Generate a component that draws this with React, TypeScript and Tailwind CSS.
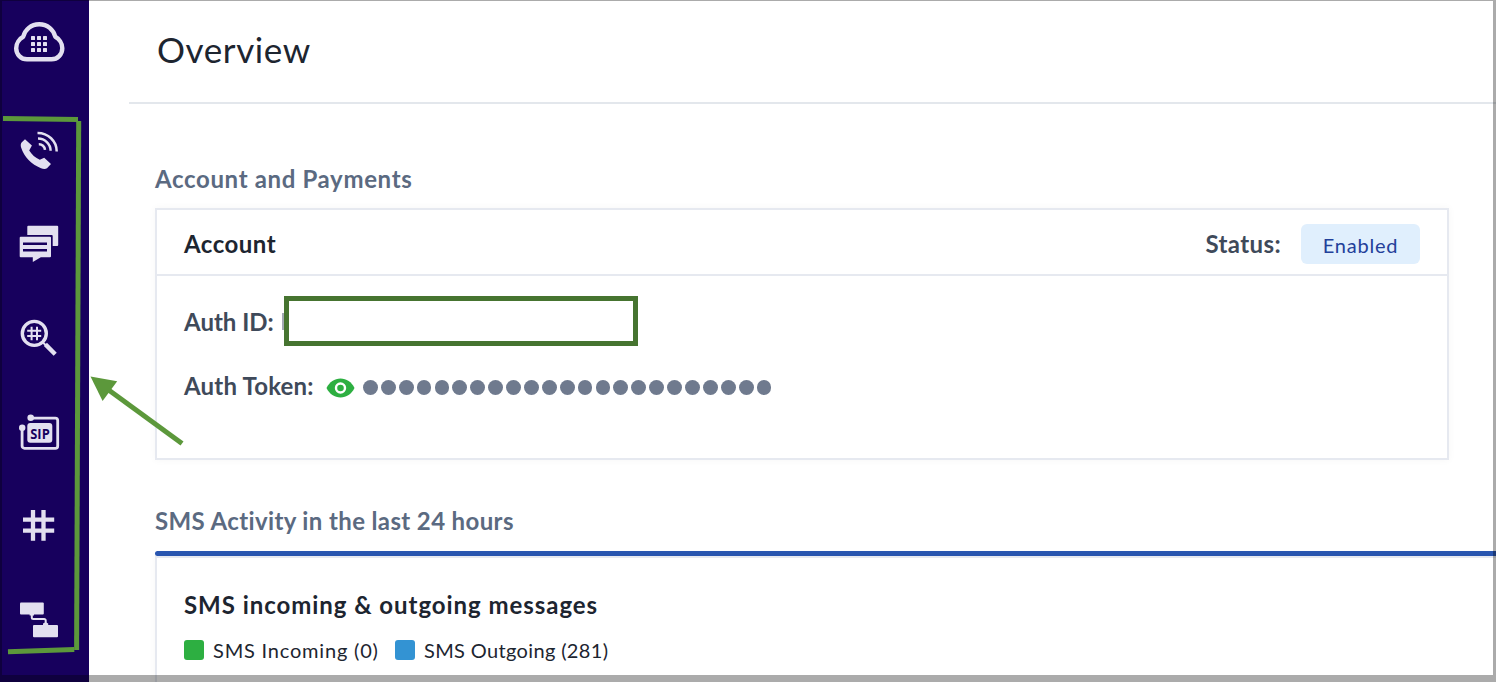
import type { ReactNode } from "react";

function NavIcon({ children }: { children: ReactNode }) {
  return (
    <a className="block h-[50px] w-[51px] shrink-0 text-[#e3e0f0]">
      <svg viewBox="0 0 51 50" className="h-[50px] w-[51px] overflow-visible" fill="none">
        {children}
      </svg>
    </a>
  );
}

function Sidebar() {
  return (
    <aside className="flex h-full w-[89px] shrink-0 flex-col bg-[#17005d] pl-3.5 pt-[17px]">
      <NavIcon>
        <path
          d="M13 42.3H37.5C43.5 42.3 48.3 37.5 48.3 31.2C48.3 26.3 45 21.8 41.3 19.8C39.5 12.6 33.5 7.3 25.2 7.3C17 7.3 11 12.6 9.2 19.8C5.5 21.8 2.2 26.3 2.2 31.2C2.2 37.5 7 42.3 13 42.3Z"
          stroke="currentColor"
          strokeWidth="4.4"
          strokeLinejoin="round"
        />
        {[19, 25, 31].map((y) =>
          [17, 23, 29].map((x) => (
            <rect key={`${x}-${y}`} x={x} y={y} width="4" height="4" rx="0.6" fill="currentColor" />
          ))
        )}
      </NavIcon>

      <nav className="mt-[59px] flex flex-col gap-11">
        {/* Voice */}
        <NavIcon>
          <path
            d="M11 13.3L17.9 19.6L15.2 24.6C17.6 28.6 21.4 32 25.8 33.7L30.2 31.8L37 38L33 42.3C31.6 43.4 29 43.2 27 42.3C17.4 38.4 10.2 31 7.1 21.6C6.5 19.4 6.7 17.2 7.8 16.2Z"
            fill="currentColor"
          />
          <g stroke="currentColor" strokeWidth="2.5">
            <path d="M23.5 6.9A19 18.5 0 0 1 42.7 25.4" />
            <path d="M24 12.6A12.5 12.2 0 0 1 36.6 24.7" />
            <path d="M24.8 18.3A6 6 0 0 1 31 23.8" />
          </g>
        </NavIcon>
        {/* Messaging */}
        <NavIcon>
          <path
            d="M14.3 5.7H43.2a1 1 0 0 1 1 1V25a1 1 0 0 1-1 1H38.7V16a1 1 0 0 0-1-1H13.3V6.7a1 1 0 0 1 1-1Z"
            fill="currentColor"
          />
          <path
            d="M6.7 16.8H36a1 1 0 0 1 1 1V36.2a1 1 0 0 1-1 1H26.8L18.8 42V37.2H6.7a1 1 0 0 1-1-1V17.8a1 1 0 0 1 1-1Z"
            fill="currentColor"
          />
          <path d="M9 23.8H33M9 30.2H33" stroke="#17005d" strokeWidth="2.6" />
        </NavIcon>
        {/* Lookup */}
        <NavIcon>
          <circle cx="20.3" cy="19.4" r="12" stroke="currentColor" strokeWidth="3.4" />
          <path
            d="M17.6 12.8V26.2M23 12.8V26.2M13.2 16.8H27.2M13.2 22.1H27.2"
            stroke="currentColor"
            strokeWidth="2"
          />
          <path d="M28 27.5L32 31.5" stroke="currentColor" strokeWidth="2" />
          <path d="M31.4 30.4L41.2 40.2" stroke="currentColor" strokeWidth="4.4" />
        </NavIcon>
        {/* SIP */}
        <NavIcon>
          <path
            d="M16.7 10.1H41.3a2.4 2.4 0 0 1 2.4 2.4V37.9a2.4 2.4 0 0 1-2.4 2.4H10.5a2.4 2.4 0 0 1-2.4-2.4V19.7"
            stroke="currentColor"
            strokeWidth="2.8"
          />
          <circle cx="16.7" cy="9.7" r="3.3" fill="currentColor" />
          <circle cx="8.2" cy="19.7" r="3.2" fill="currentColor" />
          <rect x="13.3" y="15" width="25" height="19.8" rx="3" fill="currentColor" />
          <text
            x="16.3"
            y="30.6"
            textLength="19.4"
            lengthAdjust="spacingAndGlyphs"
            className="fill-[#17005d] font-['Open_Sans',sans-serif] text-[14px] font-bold"
          >
            SIP
          </text>
        </NavIcon>
        {/* Phone numbers */}
        <NavIcon>
          <path
            d="M19 8V38.8M29.5 8V38.8M9 17.7H40.2M9 28.7H40.2"
            stroke="currentColor"
            strokeWidth="4.3"
          />
        </NavIcon>
        {/* Flows */}
        <NavIcon>
          <rect x="6" y="6.4" width="23.8" height="12" rx="1" fill="currentColor" />
          <rect x="19" y="28.9" width="25" height="12.4" rx="1" fill="currentColor" />
          <path
            d="M17.8 19V21.4a1.5 1.5 0 0 0 1.5 1.5H30.2a1.5 1.5 0 0 1 1.5 1.5V28"
            stroke="currentColor"
            strokeWidth="2"
          />
          <path d="M15.6 18H20V19.6H15.6ZM29 29V27.4L31 26.4H32.4L34.2 27.4V29Z" fill="currentColor" />
        </NavIcon>
      </nav>
    </aside>
  );
}

function AccountCard() {
  return (
    <div className="h-[252px] w-[1294px] border-2 border-[#e6e9f0] shadow-[0_0_8px_rgba(0,0,0,0.04)]">
      <div className="flex h-[66px] items-center border-b-2 border-[#e6e9f0] px-[27px] pt-1">
        <h3 className="text-2xl/8 font-bold tracking-[0.5px] text-[#1d2530]">Account</h3>
        <span className="ml-auto text-2xl/8 font-bold tracking-[0.4px] text-[#3f4a5a]">
          Status:
        </span>
        <span className="ml-5 flex h-10 w-[119px] items-center justify-center rounded-md bg-[#e0effd] pt-0.5 text-xl tracking-[0.8px] text-[#23409a]">
          Enabled
        </span>
      </div>
      <div className="px-[27px] pt-5 text-2xl/8 font-bold text-[#3f4a5a]">
        <div className="flex h-[50px] items-center">
          <span className="w-[98px] whitespace-nowrap pt-0.5">Auth ID:</span>
          <span className="h-[17px] w-0.5 bg-[#a3a9b3]" />
          <div className="h-[50px] w-[354px] border-[5px] border-[#467430] bg-white" />
        </div>
        <div className="mt-6 flex h-8 items-center">
          <span className="w-[142px] whitespace-nowrap tracking-[0.2px]">Auth Token:</span>
          <svg viewBox="0 0 29 20" className="mt-1 h-5 w-[29px]">
            <path
              d="M0.5 10C3.5 4 8.5 0.5 14.5 0.5S25.5 4 28.5 10C25.5 16 20.5 19.5 14.5 19.5S3.5 16 0.5 10Z"
              fill="#2daf41"
            />
            <circle cx="14.5" cy="10" r="4.5" fill="none" stroke="#fff" strokeWidth="2.4" />
          </svg>
          <div className="ml-2 mt-[3px] flex gap-[3.1px]">
            {Array.from({ length: 23 }, (_, i) => (
              <span key={i} className="size-[14.8px] rounded-full bg-[#6f7a8e]" />
            ))}
          </div>
        </div>
      </div>
    </div>
  );
}

function SmsCard() {
  return (
    <div>
      <div className="h-[5px] rounded-l-sm bg-[#2a57b2]" />
      <div className="h-[140px] border-l-2 border-t-2 border-[#e6e9f0] pl-[27px] pt-[31px] shadow-[0_0_8px_rgba(0,0,0,0.04)]">
        <h3 className="text-2xl/8 font-bold tracking-[0.95px] text-[#1d2530]">
          SMS incoming &amp; outgoing messages
        </h3>
        <div className="mt-[19px] flex h-5 items-center text-xl/5 text-[#1d2530]">
          <span className="size-5 rounded-[3px] bg-[#2daf41]" />
          <span className="ml-[9px] w-[182px] whitespace-nowrap tracking-[0.8px]">SMS Incoming (0)</span>
          <span className="size-5 rounded-[3px] bg-[#3393d3]" />
          <span className="ml-[9px] whitespace-nowrap tracking-[0.35px]">SMS Outgoing (281)</span>
        </div>
      </div>
    </div>
  );
}

// Hand drawn pointers lying over the page
function Annotations() {
  return (
    <svg
      viewBox="0 0 200 682"
      className="pointer-events-none absolute left-0 top-0 h-[682px] w-[200px]"
      fill="none"
      stroke="#5c983b"
      strokeWidth="5"
    >
      <path d="M3 118.5L78 119.6" />
      <path d="M78.7 121L76.6 650" />
      <path d="M8 651.7L74.3 649.5" />
      <path d="M108 389.5L182 443.5" />
      <path d="M90.5 376.5L117.2 381.3L102.6 401Z" fill="#5c983b" stroke="none" />
    </svg>
  );
}

export default function App() {
  return (
    <div className="relative flex h-[682px] w-[1496px] overflow-hidden bg-white font-['Lato',sans-serif]">
      <Sidebar />
      <main className="min-w-0 flex-1">
        <header className="ml-10 flex h-[104px] items-center border-b-2 border-[#e3e7ec] pb-1 pl-7">
          <h1 className="text-[35px]/[40px] font-normal tracking-[0.6px] text-[#1d2530]">Overview</h1>
        </header>
        <div className="pl-[66px]">
          <h2 className="mt-[59px] text-2xl/8 font-bold tracking-[0.65px] text-[#5b6a81]">
            Account and Payments
          </h2>
          <div className="mt-[13px]">
            <AccountCard />
          </div>
          <h2 className="mt-[45px] text-2xl/8 font-bold tracking-[0.37px] text-[#5b6a81]">
            SMS Activity in the last 24 hours
          </h2>
          <div className="mt-3.5">
            <SmsCard />
          </div>
        </div>
      </main>
      <Annotations />
      <div className="pointer-events-none absolute inset-0 border-b-[7px] border-l-2 border-r-[3px] border-t border-black/33" />
    </div>
  );
}
